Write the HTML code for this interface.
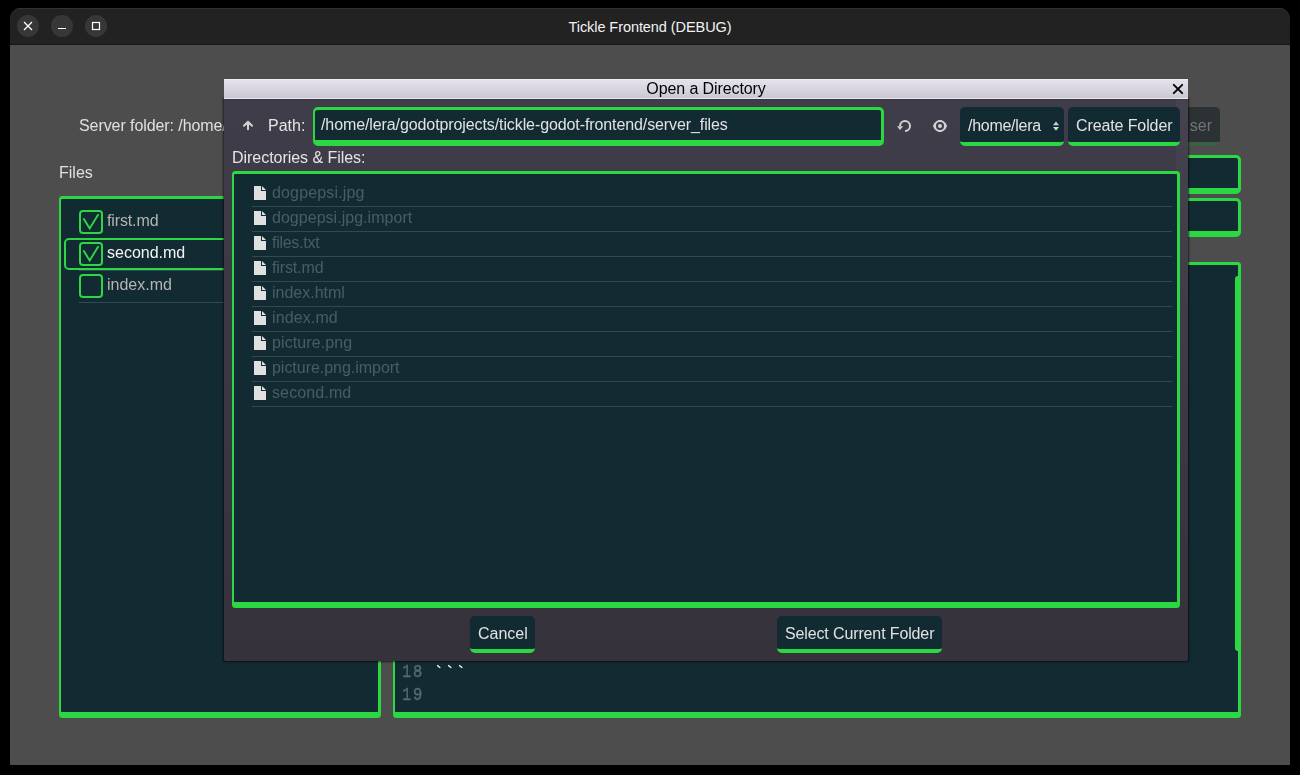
<!DOCTYPE html>
<html>
<head>
<meta charset="utf-8">
<title>Tickle Frontend (DEBUG)</title>
<style>
*{box-sizing:border-box;margin:0;padding:0}
html,body{width:1300px;height:775px;overflow:hidden;background:#000}
body{position:relative;font-family:"Liberation Sans",sans-serif;font-size:16px;color:#e4e4e4}
.abs{position:absolute}
.t{position:absolute;white-space:nowrap;font-size:16px;line-height:20px;margin-top:1px;will-change:transform}
/* outer window */
#win{position:absolute;left:10px;top:8px;width:1280px;height:757px;border-radius:11px 11px 0 0;overflow:hidden;background:#4d4d4d}
#tbar{position:absolute;left:0;top:0;width:1280px;height:37px;background:#222222;border-top:1px solid #323232;border-bottom:1px solid #171717}
.wb{position:absolute;top:6px;width:22px;height:22px;border-radius:11px;background:#373737}
#wtitle{position:absolute;left:0;width:1280px;top:8px;text-align:center;font-size:14.5px;line-height:20px;color:#f2f2f2;letter-spacing:-0.07px}
/* themed boxes */
.box{position:absolute;background:#122a32;border-style:solid;border-color:#2bd843;border-width:3px 3px 6px 2px;border-radius:3.5px}
.le{border-radius:5px}
.btn{position:absolute;background:#122a32;border-bottom:4px solid #2bd843;border-radius:5px;height:39px}
.sep{position:absolute;height:1px;background:#34494f}
.cb{position:absolute;width:24px;height:24px;border:2px solid #2bd843;border-radius:4px}
/* dialog */
#dtitle{position:absolute;left:224px;top:79px;width:964px;height:20px;background:linear-gradient(#e3e1ea,#d8d5e0 50%,#cbc8d5);border-top:1px solid #eeedf3;border-bottom:1px solid #e9e7ef}
#dpanel{position:absolute;left:224px;top:99px;width:964px;height:562px;background:linear-gradient(#403d4a,#35323c);box-shadow:0 0 2px 0.5px rgba(0,0,0,0.6);border-radius:0 0 2px 2px;border-top:1px solid #38353f}
.frow{position:absolute;left:252px;width:920px;height:25px}
.frow svg{position:absolute;left:0;top:3px}
.frow span{position:absolute;left:20px;top:1px;font-size:16px;line-height:20px;color:#485e63;white-space:nowrap;will-change:transform}
.frow i{position:absolute;left:0;top:24px;width:920px;height:1px;background:#34494f}
.mono{font-family:"Liberation Mono",monospace}
</style>
</head>
<body>
<div id="win">
  <div id="tbar">
    <div class="wb" style="left:7px"><svg width="22" height="22" viewBox="0 0 22 22"><path d="M7 7L15 15M15 7L7 15" stroke="#fff" stroke-width="1.3" fill="none"/></svg></div>
    <div class="wb" style="left:41px"><svg width="22" height="22" viewBox="0 0 22 22"><path d="M7 13.5H15" stroke="#fff" stroke-width="1.2" fill="none"/></svg></div>
    <div class="wb" style="left:75px"><svg width="22" height="22" viewBox="0 0 22 22"><rect x="7.5" y="7.5" width="7" height="7" stroke="#fff" stroke-width="1.2" fill="none"/></svg></div>
    <div id="wtitle">Tickle Frontend (DEBUG)</div>
  </div>
</div>

<!-- main app (page coordinates) -->
<div class="t" style="left:79px;top:115px;color:#e0e0e0;letter-spacing:-0.08px">Server folder: /home/lera/godotprojects</div>
<div class="t" style="left:59px;top:162px;color:#e0e0e0">Files</div>

<div class="box" style="left:59px;top:196px;width:322px;height:522px"></div>
<div class="sep" style="left:79px;top:238px;width:290px"></div>
<div class="sep" style="left:79px;top:270px;width:290px"></div>
<div class="sep" style="left:79px;top:302px;width:290px"></div>
<div class="abs" style="left:64px;top:238px;width:310px;height:32px;border:2px solid #2bd843;border-radius:5px;background:#122a32"></div>
<div class="cb" style="left:79px;top:210px"><svg class="abs" style="left:-2px;top:-2px" width="24" height="24"><path d="M4.9 9.1L10.65 18.5L19.1 4.8" stroke="#2bd843" stroke-width="1.9" fill="none" stroke-linecap="round" stroke-linejoin="miter"/></svg></div>
<div class="cb" style="left:79px;top:242px"><svg class="abs" style="left:-2px;top:-2px" width="24" height="24"><path d="M4.9 9.1L10.65 18.5L19.1 4.8" stroke="#2bd843" stroke-width="1.9" fill="none" stroke-linecap="round" stroke-linejoin="miter"/></svg></div>
<div class="cb" style="left:79px;top:274px"></div>
<div class="t" style="left:107px;top:210px;color:#b4b4b4;letter-spacing:-0.13px">first.md</div>
<div class="t" style="left:107px;top:242px;color:#f4f4f4">second.md</div>
<div class="t" style="left:107px;top:274px;color:#b4b4b4">index.md</div>

<!-- right column behind dialog -->
<div class="btn" style="left:1090px;top:107px;width:130px;background:#2c3134;border-bottom-color:#3d5f45"></div>
<div class="t" style="left:1090px;top:115px;width:122px;text-align:right;color:#6f7678">ser</div>
<div class="box le" style="left:393px;top:155px;width:848px;height:39px"></div>
<div class="box le" style="left:393px;top:198px;width:848px;height:39px"></div>
<div class="box" style="left:393px;top:262px;width:848px;height:456px"></div>
<div class="abs" style="left:1235px;top:276px;width:6px;height:375px;background:#2bd843;border-radius:3px 0 0 3px"></div>
<div class="t mono" style="left:401.7px;top:661px;font-size:18px;letter-spacing:1.99px;color:#566b71;transform:scaleX(0.86);transform-origin:0 0;-webkit-text-stroke:0.4px #566b71">18</div>
<div class="t mono" style="left:401.7px;top:684px;font-size:18px;letter-spacing:1.99px;color:#566b71;transform:scaleX(0.86);transform-origin:0 0;-webkit-text-stroke:0.4px #566b71">19</div>
<svg class="abs" style="left:430px;top:660px" width="40" height="12"><path d="M7.6 5.6L9.9 7.5M18.6 5.6L20.9 7.5M29.6 5.6L31.9 7.5" stroke="#ececec" stroke-width="1.4" stroke-linecap="round" fill="none"/></svg>

<!-- dialog -->
<div id="dpanel"></div>
<div class="abs" style="left:1176px;top:99px;width:12px;height:480px;background:linear-gradient(to bottom,rgba(255,255,255,0.03),rgba(255,255,255,0))"></div>
<div id="dtitle"></div>
<div class="t" style="left:224px;top:78.4px;width:964px;text-align:center;color:#000;line-height:20px;letter-spacing:-0.1px">Open a Directory</div>
<svg class="abs" style="left:1170px;top:81px" width="16" height="16"><path d="M3.8 3.8L12.2 12.2M12.2 3.8L3.8 12.2" stroke="#000" stroke-width="1.9" stroke-linecap="round" fill="none"/></svg>

<svg class="abs" style="left:240px;top:118px" width="16" height="16"><path d="M8 11.3V4M4 7.8L8 3.8L12 7.8" stroke="#d2d2d2" stroke-width="2" fill="none" stroke-linecap="round" stroke-linejoin="round"/></svg>
<div class="t" style="left:268px;top:115px">Path:</div>
<div class="box le" style="left:313px;top:107px;width:571px;height:39px"></div>
<div class="t" style="left:321px;top:114px;color:#e2e2e2;letter-spacing:-0.1px">/home/lera/godotprojects/tickle-godot-frontend/server_files</div>

<svg class="abs" style="left:896px;top:118px" width="16" height="16"><path d="M4 8A5 5 0 1 1 9 13" stroke="#d2d2d2" stroke-width="2" fill="none"/><path d="M1 8.2H7.2L4 12z" fill="#d2d2d2"/></svg>
<svg class="abs" style="left:932px;top:118px" width="16" height="16"><path d="M1 8C2.2 4.5 5 2 8 2S13.8 4.5 15 8C13.8 11.5 11 14 8 14S2.2 11.5 1 8Z" fill="#d2d2d2"/><circle cx="8" cy="8" r="4" fill="#3f3c49"/><circle cx="8" cy="8" r="2" fill="#d2d2d2"/></svg>

<div class="btn" style="left:960px;top:107px;width:104px"></div>
<div class="t" style="left:968px;top:115px;color:#e2e2e2;letter-spacing:-0.28px">/home/lera</div>
<svg class="abs" style="left:1052px;top:120px" width="8" height="12"><path d="M1 5.2L4 1.4L7 5.2zM1 7L4 10.8L7 7z" fill="#d2d2d2"/></svg>
<div class="btn" style="left:1068px;top:107px;width:112px"></div>
<div class="t" style="left:1076px;top:115px;color:#e2e2e2;letter-spacing:-0.11px">Create Folder</div>

<div class="t" style="left:232px;top:147px;letter-spacing:-0.04px">Directories &amp; Files:</div>
<div class="box" style="left:232px;top:171px;width:948px;height:437px"></div>

<div class="frow" style="top:182px"><svg width="16" height="16"><path d="M2 1v14h12V6H9V1zM10 1v4h4z" fill="#e0e0e0"/></svg><span style="letter-spacing:0.15px">dogpepsi.jpg</span><i></i></div>
<div class="frow" style="top:207px"><svg width="16" height="16"><path d="M2 1v14h12V6H9V1zM10 1v4h4z" fill="#e0e0e0"/></svg><span style="letter-spacing:0.03px">dogpepsi.jpg.import</span><i></i></div>
<div class="frow" style="top:232px"><svg width="16" height="16"><path d="M2 1v14h12V6H9V1zM10 1v4h4z" fill="#e0e0e0"/></svg><span style="letter-spacing:-0.27px">files.txt</span><i></i></div>
<div class="frow" style="top:257px"><svg width="16" height="16"><path d="M2 1v14h12V6H9V1zM10 1v4h4z" fill="#e0e0e0"/></svg><span style="letter-spacing:-0.13px">first.md</span><i></i></div>
<div class="frow" style="top:282px"><svg width="16" height="16"><path d="M2 1v14h12V6H9V1zM10 1v4h4z" fill="#e0e0e0"/></svg><span>index.html</span><i></i></div>
<div class="frow" style="top:307px"><svg width="16" height="16"><path d="M2 1v14h12V6H9V1zM10 1v4h4z" fill="#e0e0e0"/></svg><span style="letter-spacing:0.12px">index.md</span><i></i></div>
<div class="frow" style="top:332px"><svg width="16" height="16"><path d="M2 1v14h12V6H9V1zM10 1v4h4z" fill="#e0e0e0"/></svg><span style="letter-spacing:0.1px">picture.png</span><i></i></div>
<div class="frow" style="top:357px"><svg width="16" height="16"><path d="M2 1v14h12V6H9V1zM10 1v4h4z" fill="#e0e0e0"/></svg><span style="letter-spacing:-0.03px">picture.png.import</span><i></i></div>
<div class="frow" style="top:382px"><svg width="16" height="16"><path d="M2 1v14h12V6H9V1zM10 1v4h4z" fill="#e0e0e0"/></svg><span style="letter-spacing:0.12px">second.md</span><i></i></div>

<div class="btn" style="left:470px;top:616px;width:65px;height:37px"></div>
<div class="t" style="left:478px;top:623px;color:#e2e2e2">Cancel</div>
<div class="btn" style="left:777px;top:616px;width:165px;height:37px"></div>
<div class="t" style="left:785px;top:623px;color:#e2e2e2;letter-spacing:-0.13px">Select Current Folder</div>
</body>
</html>
